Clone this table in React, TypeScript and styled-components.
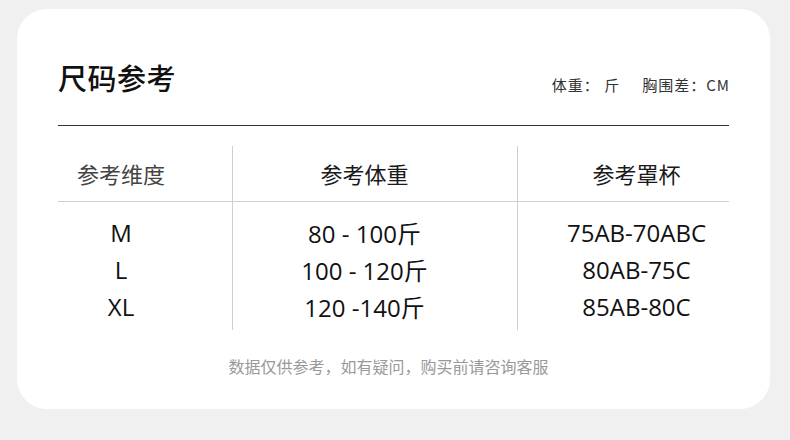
import React from "react";
import styled, { createGlobalStyle } from "styled-components";

const Global = createGlobalStyle`
  html, body { margin: 0; padding: 0; }
  body {
    background: #f0f0f0;
    width: 790px;
    height: 440px;
    overflow: hidden;
    font-family: "Noto Sans CJK SC", "Noto Sans", sans-serif;
  }
`;

const Page = styled.div`
  width: 790px;
  height: 440px;
  padding: 9px 20px 0 17px;
  box-sizing: border-box;
`;

const Card = styled.div`
  width: 753px;
  height: 400px;
  background: #fff;
  border-radius: 30px;
  padding: 0 41px;
  box-sizing: border-box;
  display: flex;
  flex-direction: column;
`;

const Header = styled.div`
  display: flex;
  justify-content: space-between;
  align-items: flex-end;
  padding: 52px 0 32px;
  border-bottom: 1px solid #333;
`;

const Title = styled.h1`
  margin: 0;
  font-size: 29px;
  line-height: 32px;
  font-weight: 500;
  color: #111;
  letter-spacing: 0.5px;
`;

const Note = styled.div`
  display: flex;
  gap: 22px;
  font-size: 15px;
  line-height: 18px;
  letter-spacing: 1px;
  color: #333;
  margin-bottom: -1px;
  margin-right: -1px;
`;

const Table = styled.div`
  display: grid;
  grid-template-columns: 174px 285px 212px;
  margin-top: 20px;
`;

const Column = styled.div<{ $divider?: boolean }>`
  display: flex;
  flex-direction: column;
  border-left: ${(p) => (p.$divider ? "1px solid #cfcfcf" : "none")};
  padding-bottom: 5px;
`;

const HeadCell = styled.div<{ $padL: number; $padR: number; $muted?: boolean }>`
  height: 56px;
  box-sizing: border-box;
  border-bottom: 1px solid #cfcfcf;
  display: flex;
  align-items: center;
  justify-content: center;
  padding: 0 ${(p) => p.$padR}px 2px ${(p) => p.$padL}px;
  font-size: 22px;
  font-weight: 400;
  color: ${(p) => (p.$muted ? "#444" : "#1a1a1a")};
`;

const Body = styled.div<{ $padL: number; $padR: number }>`
  display: flex;
  flex-direction: column;
  padding: 12px ${(p) => p.$padR}px 0 ${(p) => p.$padL}px;
`;

const DataCell = styled.div`
  height: 37px;
  display: flex;
  align-items: center;
  justify-content: center;
  font-family: "Open Sans", "Noto Sans CJK SC", sans-serif;
  font-size: 24px;
  color: #111;
  white-space: pre;
`;

const Footer = styled.div`
  margin-top: 26px;
  text-align: center;
  font-size: 16px;
  line-height: 20px;
  color: #999;
  padding-right: 10px;
`;

const columns = [
  { head: "参考维度", muted: true, padL: 0, padR: 48, rows: ["M", "L", "XL"] },
  { head: "参考体重", padL: 0, padR: 21, rows: ["80 - 100斤", "100 - 120斤", "120 -140斤"] },
  { head: "参考罩杯", padL: 26, padR: 0, rows: ["75AB-70ABC", "80AB-75C", "85AB-80C"] },
];

export default function App() {
  return (
    <Page>
      <Global />
      <Card>
        <Header>
          <Title>尺码参考</Title>
          <Note>
            <span>体重： 斤</span>
            <span>胸围差：CM</span>
          </Note>
        </Header>
        <Table>
          {columns.map((c, i) => (
            <Column key={c.head} $divider={i > 0}>
              <HeadCell $padL={c.padL} $padR={c.padR} $muted={c.muted}>
                {c.head}
              </HeadCell>
              <Body $padL={c.padL} $padR={c.padR}>
                {c.rows.map((r) => (
                  <DataCell key={r}>{r}</DataCell>
                ))}
              </Body>
            </Column>
          ))}
        </Table>
        <Footer>数据仅供参考，如有疑问，购买前请咨询客服</Footer>
      </Card>
    </Page>
  );
}
